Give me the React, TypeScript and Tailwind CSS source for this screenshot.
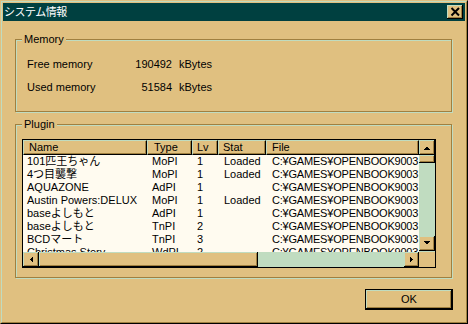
import React from "react";

const raised =
  "bg-[#E0C080] shadow-[inset_-1px_-1px_0_#000,inset_1px_1px_0_#C0DCC0,inset_-2px_-2px_0_#A08040]";

type Col = { w: string; hp: string; rp: string; label: string };

const cols: Col[] = [
  { w: "w-[124px]", hp: "pl-[5px]", rp: "pl-[4px]", label: "Name" },
  { w: "w-[45px]", hp: "pl-[6px]", rp: "pl-[5px]", label: "Type" },
  { w: "w-[26px]", hp: "pl-[4px]", rp: "pl-[5px]", label: "Lv" },
  { w: "w-[48px]", hp: "pl-[4px]", rp: "pl-[6px]", label: "Stat" },
  { w: "w-[153px]", hp: "pl-[5px]", rp: "pl-[6px] tracking-[-0.2px]", label: "File" },
];

const path = "C:¥GAMES¥OPENBOOK9003";

const rows: string[][] = [
  ["101匹王ちゃん", "MoPI", "1", "Loaded", path],
  ["4つ目襲撃", "MoPI", "1", "Loaded", path],
  ["AQUAZONE", "AdPI", "1", "", path],
  ["Austin Powers:DELUX", "MoPI", "1", "Loaded", path],
  ["baseよしもと", "AdPI", "1", "", path],
  ["baseよしもと", "TnPI", "2", "", path],
  ["BCDマート", "TnPI", "3", "", path],
  ["Christmas Story", "WdPI", "2", "", path],
];

function Arrow({ points, w, h }: { points: string; w: number; h: number }) {
  return (
    <svg width={w} height={h} className="block" shapeRendering="crispEdges">
      <polygon points={points} fill="#000" />
    </svg>
  );
}

function Group({
  label,
  labelW,
  className,
  children,
}: {
  label: string;
  labelW?: string;
  className: string;
  children: React.ReactNode;
}) {
  return (
    <div
      className={
        "relative ml-[12px] w-[437px] border border-[#A08040] shadow-[inset_1px_1px_0_#C0DCC0,1px_1px_0_#C0DCC0] " +
        className
      }
    >
      <div className="absolute left-[6px] top-[-7px] bg-[#E0C080] px-[2px] leading-[13px]">
        {label}
      </div>
      {children}
    </div>
  );
}

export default function App() {
  return (
    <div className="w-[468px] h-[324px] bg-[#E0C080] font-['Liberation_Sans','Noto_Sans_CJK_JP',sans-serif] text-[11px] leading-[13px] text-black">
      <div className="w-full h-full border border-t-[#E0C080] border-l-[#E0C080] border-r-black border-b-black">
        <div className="w-full h-full border border-t-[#C0DCC0] border-l-[#C0DCC0] border-r-[#A08040] border-b-[#A08040] p-[1px] flex flex-col">
          {/* Title bar */}
          <div className="h-[18px] bg-[#004040] flex items-center justify-between pl-[1px] pr-[2px]">
            <span className="text-white text-[11px] tracking-[-0.5px] leading-[18px]">
              システム情報
            </span>
            <div className={"relative w-[16px] h-[14px] " + raised}>
              <svg width={16} height={14} className="absolute left-0 top-0">
                <path d="M4.5 3 L12 10.5 M12 3 L4.5 10.5" stroke="#000" strokeWidth={2} fill="none" />
              </svg>
            </div>
          </div>

          {/* Memory */}
          <Group label="Memory" className="mt-[18px] h-[73px] pt-[18px]">
            <div className="flex pl-[11px] h-[13px]">
              <span className="w-[105px]">Free memory</span>
              <span className="w-[40px] text-right">190492</span>
              <span className="ml-[7px]">kBytes</span>
            </div>
            <div className="flex pl-[11px] h-[13px] mt-[10px]">
              <span className="w-[105px]">Used memory</span>
              <span className="w-[40px] text-right">51584</span>
              <span className="ml-[7px]">kBytes</span>
            </div>
          </Group>

          {/* Plugin */}
          <Group label="Plugin" className="mt-[12px] h-[154px]">
            <div className="ml-[6px] mt-[14px] w-[414px] h-[129px] border border-black flex">
              <div className="w-[396px] flex flex-col">
                {/* header */}
                <div className="flex h-[15px] bg-[#E0C080]">
                  {cols.map((c) => (
                    <div
                      key={c.label}
                      className={
                        c.w +
                        " " +
                        c.hp +
                        " h-[15px] border border-t-[#C0DCC0] border-l-[#C0DCC0] border-r-black border-b-black shadow-[inset_-1px_-1px_0_#A08040] leading-[13px] whitespace-nowrap overflow-hidden"
                      }
                    >
                      {c.label}
                    </div>
                  ))}
                </div>
                {/* rows */}
                <div className="h-[97px] overflow-hidden bg-[#FFFBF0] flex flex-col">
                  {rows.map((r, i) => (
                    <div key={i} className="flex h-[13px] shrink-0">
                      {r.map((cell, j) => (
                        <div
                          key={j}
                          className={
                            cols[j].w +
                            " " +
                            cols[j].rp +
                            " h-[13px] leading-[13px] whitespace-nowrap overflow-hidden"
                          }
                        >
                          {cell}
                        </div>
                      ))}
                    </div>
                  ))}
                </div>
                {/* horizontal scrollbar */}
                <div className="flex h-[15px]">
                  <div className={"w-[16px] h-[15px] " + raised}>
                    <Arrow w={16} h={15} points="10,4 10,11 6.5,7.5" />
                  </div>
                  <div className={"w-[219px] h-[15px] " + raised} />
                  <div className="flex-1 bg-[#C0DCC0]" />
                  <div className={"w-[15px] h-[15px] " + raised}>
                    <Arrow w={15} h={15} points="5.5,4 5.5,11 9,7.5" />
                  </div>
                </div>
              </div>
              {/* vertical scrollbar */}
              <div className="w-[16px] flex flex-col">
                <div className={"h-[15px] " + raised}>
                  <Arrow w={16} h={15} points="4,10 11,10 7.5,6.5" />
                </div>
                <div className={"h-[8px] " + raised} />
                <div className="flex-1 bg-[#C0DCC0]" />
                <div className={"h-[15px] " + raised}>
                  <Arrow w={16} h={15} points="4,5 11,5 7.5,8.5" />
                </div>
                <div className="h-[1px] bg-[#C0DCC0]" />
                <div className="h-[15px] bg-[#E0C080]" />
              </div>
            </div>
          </Group>

          {/* Button */}
          <div className="flex justify-end pr-[12px] mt-[11px]">
            <div
              className="w-[88px] h-[21px] border border-black bg-[#E0C080] shadow-[inset_-1px_-1px_0_#000,inset_1px_1px_0_#C0DCC0,inset_-2px_-2px_0_#A08040] flex items-center justify-center leading-[13px]"
            >
              OK
            </div>
          </div>
        </div>
      </div>
    </div>
  );
}
